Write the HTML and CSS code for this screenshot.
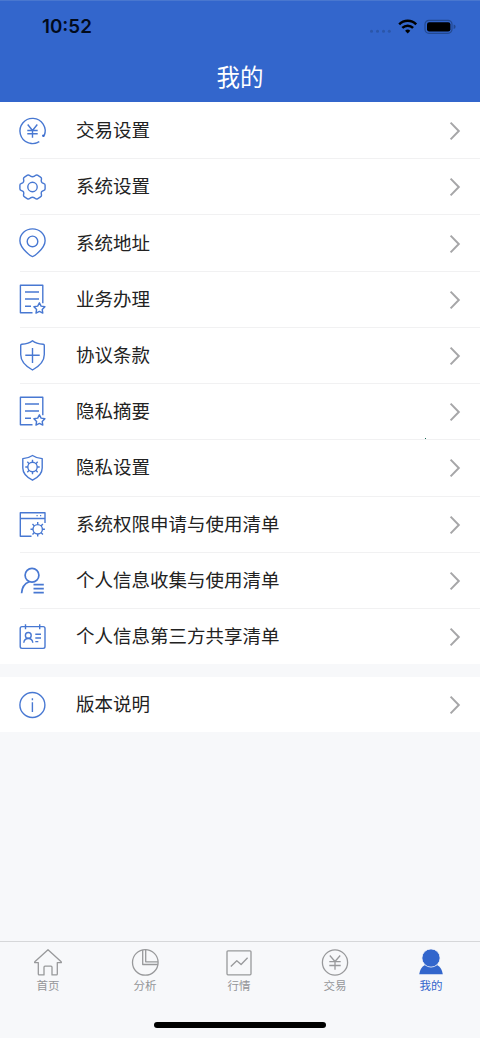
FILE: index.html
```html
<!DOCTYPE html>
<html lang="zh-CN">
<head>
<meta charset="utf-8">
<title>我的</title>
<link rel="stylesheet" href="styles.css">
</head>
<body>
<svg class="defs" width="0" height="0">
  <symbol id="chevron" viewBox="0 0 12 20"><path d="M1.6 1.6 9.8 10 1.6 18.4"/></symbol>
  <symbol id="doc" viewBox="0 0 32 34">
    <path d="M15.5 29.8H3.4V2.2h22.4v18M8 9h14M8 16h14M8 23.3h6"/>
    <path d="m22.4 19.8 1.7 3.3 3.8.6-2.7 2.7.6 3.7-3.4-1.7-3.4 1.7.6-3.7-2.7-2.7 3.8-.6z"/>
  </symbol>
  <symbol id="cog" viewBox="-8 -8 16 16">
    <circle r="4.7"/>
    <path d="M0-4.7V-7.2M0 4.7V7.2M-4.7 0H-7.2M4.7 0H7.2M3.3-3.3 5.2-5.2M-3.3-3.3-5.2-5.2M3.3 3.3 5.2 5.2M-3.3 3.3-5.2 5.2"/>
  </symbol>
</svg>
<div class="screen">
  <header class="header">
    <div class="status">
      <span class="time">10:52</span>
      <svg class="indicators" width="88" height="18" viewBox="0 0 88 18">
        <g fill="#2b56a9"><circle cx="3.5" cy="13.2" r="1.5"/><circle cx="9.5" cy="13.2" r="1.5"/><circle cx="15.5" cy="13.2" r="1.5"/><circle cx="21.3" cy="13.2" r="1.5"/></g>
        <path fill="none" stroke="#000" stroke-width="2.5" d="M31.2 6.4a12 12 0 0 1 17 0M34.3 9.8a7.8 7.8 0 0 1 10.8 0"/>
        <path d="m39.7 15.5-2.6-2.8a3.8 3.8 0 0 1 5.2 0z"/>
        <rect x="57" y="2.3" width="27" height="13" rx="4" fill="none" stroke="#234991" stroke-width="1.2"/>
        <rect x="59" y="4.2" width="23.4" height="9.2" rx="2.2"/>
        <path fill="#234991" d="M85.6 6.5q2 .6 2 2.3t-2 2.3z"/>
      </svg>
    </div>
    <h1 class="title">我的</h1>
  </header>

  <main class="content">
    <div class="group">
      <div class="row">
        <svg class="icon" viewBox="0 0 32 34"><path d="M22.3 27.6A12.6 12.6 0 1 1 27.3 21.5M21 28.4A12.6 12.6 0 0 1 13 29.3M10.7 10.5l4.8 6 4.8-6M15.5 16.5v7.2M10.3 16.5h10.4M10.3 19.8h10.4"/><circle class="solid" cx="26.4" cy="21.8" r="1.3"/></svg>
        <span class="label">交易设置</span><svg class="chevron"><use href="#chevron"/></svg>
      </div>
      <div class="row">
        <svg class="icon" viewBox="0 0 32 34"><g transform="translate(15.5 17)"><path d="M12.6-1.8V1.8Q12.6 3 11.5 3.4L9.8 4.2Q8.7 4.9 8.7 6.2L9 8.2Q9.1 9.2 8 9.9L5 11.8Q4 12.3 3.1 11.7L2 10.9Q0 9.7-2 10.9L-3.1 11.7Q-4 12.3-5 11.8L-8 9.9Q-9.1 9.2-9 8.2L-8.7 6.2Q-8.7 4.9-9.8 4.2L-11.5 3.4Q-12.6 3-12.6 1.8V-1.8Q-12.6-3-11.5-3.4L-9.8-4.2Q-8.7-4.9-8.7-6.2L-9-8.2Q-9.1-9.2-8-9.9L-5-11.8Q-4-12.3-3.1-11.7L-2-10.9Q0-9.7 2-10.9L3.1-11.7Q4-12.3 5-11.8L8-9.9Q9.1-9.2 9-8.2L8.7-6.2Q8.7-4.9 9.8-4.2L11.5-3.4Q12.6-3 12.6-1.8Z"/><circle r="4.7"/></g></svg>
        <span class="label">系统设置</span><svg class="chevron"><use href="#chevron"/></svg>
      </div>
      <div class="row">
        <svg class="icon" viewBox="0 0 32 34"><path d="M15.5 29.6Q13.5 29.2 9.5 25.3 2.9 18.9 2.9 13.7A12.6 11.8 0 0 1 28.1 13.7Q28.1 18.9 21.5 25.3 17.5 29.2 15.5 29.6z"/><circle cx="15.5" cy="14.4" r="5.3"/></svg>
        <span class="label">系统地址</span><svg class="chevron"><use href="#chevron"/></svg>
      </div>
      <div class="row">
        <svg class="icon"><use href="#doc"/></svg>
        <span class="label">业务办理</span><svg class="chevron"><use href="#chevron"/></svg>
      </div>
      <div class="row">
        <svg class="icon" viewBox="0 0 32 34"><path d="M15.5 1.8Q19 4.8 26.2 5.3q1.1.1 1.1 1.2V15.5Q27.3 24.5 15.5 31 3.7 24.5 3.7 15.5V6.5q0-1.1 1.1-1.2Q12 4.8 15.5 1.8zM15.5 9v15M8.3 16.3h14.4"/></svg>
        <span class="label">协议条款</span><svg class="chevron"><use href="#chevron"/></svg>
      </div>
      <div class="row">
        <svg class="icon"><use href="#doc"/></svg>
        <span class="label">隐私摘要</span><svg class="chevron"><use href="#chevron"/></svg>
        <i class="speck"></i>
      </div>
      <div class="row">
        <svg class="icon" viewBox="0 0 32 34"><path d="M15.5 4.5Q19.5 7.3 25.2 7.6V17Q25.2 24.3 15.5 29.2 5.8 24.3 5.8 17V7.6Q11.5 7.3 15.5 4.5z"/><use href="#cog" x="7.5" y="8" width="16" height="16"/></svg>
        <span class="label">隐私设置</span><svg class="chevron"><use href="#chevron"/></svg>
      </div>
      <div class="row">
        <svg class="icon" viewBox="0 0 32 34"><path d="M14.5 28.2H3.3V4.8H28V15M3.3 10.5H28M19.5 7.6h1.2M23 7.6h1.2"/><use href="#cog" x="12.7" y="13.3" width="16" height="16"/></svg>
        <span class="label">系统权限申请与使用清单</span><svg class="chevron"><use href="#chevron"/></svg>
      </div>
      <div class="row">
        <svg class="icon strong" viewBox="0 0 32 34"><circle cx="15" cy="11.3" r="6.9"/><path d="M4.6 29.3Q5 20.5 12.3 17.8M16.5 20.7h10.3M16.5 24.7h10.3M16.5 28.7h10.3"/></svg>
        <span class="label">个人信息收集与使用清单</span><svg class="chevron"><use href="#chevron"/></svg>
      </div>
      <div class="row">
        <svg class="icon" viewBox="0 0 32 34"><rect x="3.2" y="6.6" width="24.8" height="21.8" rx="1.8"/><path d="M8.5 4.3v5M22.7 4.3v5M6.8 22.8q.4-4.3 4.5-4.3t4.5 4.3M18.3 14.3h5.7M18.3 18h5.7M18.3 21.6h3"/><circle cx="11.3" cy="15.4" r="2.9"/></svg>
        <span class="label">个人信息第三方共享清单</span><svg class="chevron"><use href="#chevron"/></svg>
      </div>
    </div>
    <div class="group">
      <div class="row">
        <svg class="icon" viewBox="0 0 32 34"><circle cx="15.4" cy="17" r="12.5"/><path d="M15.4 14.3v9.7M15.4 10.2v2"/></svg>
        <span class="label">版本说明</span><svg class="chevron"><use href="#chevron"/></svg>
      </div>
    </div>
  </main>

  <nav class="tabs">
    <div class="tab"><svg viewBox="0 0 30 30"><path d="M15 1.8 28.2 13.8q.5.8-.3.8H24.3V26q0 .9-.9.9H19V19.2q0-1-1-1H12q-1 0-1 1V26.9H6.2q-.9 0-.9-.9V14.6H2.1q-.8 0-.3-.8z"/></svg><span>首页</span></div>
    <div class="tab"><svg viewBox="0 0 30 30"><circle cx="15.3" cy="14.4" r="12.8"/><path d="M12.7 1.9V16.5H27.9M15.7 1.7V13.8H28"/></svg><span>分析</span></div>
    <div class="tab"><svg viewBox="0 0 30 30"><rect x="3" y="2.8" width="24" height="24" rx="1"/><path d="m6.8 18.5 6-5.8 4.3 3.8 6.5-6.8"/></svg><span>行情</span></div>
    <div class="tab"><svg viewBox="0 0 30 30"><circle cx="15" cy="14.5" r="12.6"/><path d="m9.8 7.5 5.2 6 5.2-6M15 13.5v8.3M9.3 13.7h11.4M9.3 17.5h11.4"/></svg><span>交易</span></div>
    <div class="tab active"><svg viewBox="0 0 30 30"><path d="M3.2 26.3Q4 20 8.5 17.2H21.5Q26 20 26.8 26.3z"/><circle class="head" cx="15" cy="10" r="9.1"/></svg><span>我的</span></div>
  </nav>
  <div class="home"><i></i></div>
</div>
</body>
</html>
```
FILE: styles.css
```css
* { box-sizing: border-box; }
body { margin: 0; background: #f7f8fa; font-family: "Noto Sans CJK SC", sans-serif; }
.defs { display: block; }
.screen { width: 480px; height: 1038px; display: flex; flex-direction: column; overflow: hidden; }
.header { height: 102px; background: #3366cc; border-top: 1px solid #4977cf; flex: none; }
.status { height: 50px; padding: 2px 24px 0 42px; display: flex; align-items: center; justify-content: space-between; }
.time { font: 600 18.8px/24px Inter, sans-serif; color: #020b1c; }
.indicators { display: block; }
.title { margin: 6px 0 0; text-align: center; font-size: 23.5px; line-height: 38px; font-weight: 400; color: #fff; }
.content { flex: 1; }
.group { background: #fff; margin-bottom: 12.75px; }
.row { position: relative; height: 56.22px; padding: 0 19px 0 17px; display: flex; align-items: center; }
.row + .row { background: linear-gradient(#f1f1f2, #f1f1f2) 20px 0 / 460px 1px no-repeat; }
.group:last-child .row { height: 55px; }
.icon { width: 32px; height: 34px; margin-top: 2px; flex: none; fill: none; stroke: #4878d2; stroke-width: 1.4; stroke-linejoin: round; overflow: visible; }
.icon.strong { stroke-width: 1.7; }
.icon .solid { fill: #3366cc; stroke: none; }
.label { margin: -2px 0 0 27px; flex: 1; font-size: 18.5px; line-height: 28px; color: #222; }
.chevron { width: 12px; height: 20px; margin-top: 2px; fill: none; stroke: #a6a6a8; stroke-width: 2; }
.speck { position: absolute; left: 425px; bottom: 0; width: 1px; height: 1px; background: #176b58; }
.tabs { height: 64px; flex: none; border-top: 1px solid #d6d7d9; display: grid; grid-template-columns: repeat(5, 96px); }
.tab { padding-top: 6px; display: flex; flex-direction: column; align-items: center; color: #949598; font-size: 11.5px; line-height: 14px; }
.tab svg { width: 30px; height: 30px; fill: none; stroke: #98999b; stroke-width: 1.3; stroke-linejoin: round; }
.tab:nth-child(2) { padding-left: 2px; }
.tab:nth-child(n+3) { padding-right: 2px; }
.tab.active { color: #3366cc; }
.tab.active svg { fill: #3366cc; stroke: none; }
.tab .head { stroke: #f7f8fa; stroke-width: .8; }
.home { height: 33px; flex: none; padding-top: 17px; }
.home i { display: block; width: 172px; height: 6px; border-radius: 3px; background: #000; margin: 0 auto; }
```
